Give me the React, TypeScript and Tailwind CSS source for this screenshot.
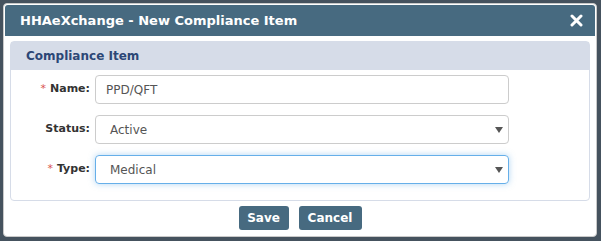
import type React from "react";

const font = { fontFamily: '"DejaVu Sans", Verdana, sans-serif' };

export default function App() {
    return (
        <div
            className="h-[241px] w-[601px] bg-[#45525e] p-[3px] pr-[4px]"
            style={font}
        >
            <div className="flex h-[234px] flex-col rounded-[4px] border border-[#c9c9c9] bg-white p-[1px]">
                {/* Title bar */}
                <div className="flex h-[31px] items-center justify-between rounded-t-[3px] bg-[#476a80] pl-[15px] pr-[12px]">
                    <span className="text-[13px] font-bold text-white">
                        HHAeXchange - New Compliance Item
                    </span>
                    <svg width="13" height="13" viewBox="0 0 13 13">
                        <path
                            d="M2 2 L11 11 M11 2 L2 11"
                            stroke="white"
                            strokeWidth="3"
                            strokeLinecap="round"
                        />
                    </svg>
                </div>

                <div className="flex flex-1 flex-col px-[5px] pt-[5px]">
                    {/* Panel */}
                    <div className="rounded-[4px] border border-[#d6dce8]">
                        <div className="flex h-[28px] items-center bg-[#d6dce8] pl-[15px]">
                            <span className="text-[12px] font-bold text-[#2c4776]">
                                Compliance Item
                            </span>
                        </div>
                        <div className="flex flex-col gap-[11px] pb-[16px] pt-[5px]">
                            <FormRow label="Name" required>
                                <div className="flex h-[29px] w-[414px] items-center rounded-[4px] border border-[#cccccc] pl-[10px] text-[12px] text-[#555]">
                                    PPD/QFT
                                </div>
                            </FormRow>
                            <FormRow label="Status">
                                <SelectBox value="Active" />
                            </FormRow>
                            <FormRow label="Type" required>
                                <SelectBox value="Medical" focused />
                            </FormRow>
                        </div>
                    </div>

                    {/* Buttons */}
                    <div className="flex justify-center gap-[10px] pt-[5px]">
                        <button
                            type="button"
                            className="h-[24px] w-[50px] rounded-[3px] bg-[#476a80] text-[12px] font-bold text-white"
                        >
                            Save
                        </button>
                        <button
                            type="button"
                            className="h-[24px] w-[63px] rounded-[3px] bg-[#476a80] text-[12px] font-bold text-white"
                        >
                            Cancel
                        </button>
                    </div>
                </div>
            </div>
        </div>
    );
}

function FormRow({
    label,
    required,
    children,
}: {
    label: string;
    required?: boolean;
    children: React.ReactNode;
}) {
    return (
        <div className="flex items-center gap-[5px]">
            <div className="w-[79px] text-right text-[11px] font-bold text-[#333]">
                {required && <span className="mr-[4px] font-normal text-[#d9534f]">*</span>}
                {label}:
            </div>
            {children}
        </div>
    );
}

function SelectBox({ value, focused }: { value: string; focused?: boolean }) {
    return (
        <div
            className={
                focused
                    ? "flex h-[29px] w-[414px] items-center justify-between rounded-[4px] border border-[#66afe9] pl-[14px] pr-[5px] text-[12px] text-[#555] shadow-[0_0_6px_rgba(102,175,233,0.5)]"
                    : "flex h-[29px] w-[414px] items-center justify-between rounded-[4px] border border-[#cccccc] pl-[14px] pr-[5px] text-[12px] text-[#555]"
            }
        >
            <span>{value}</span>
            <svg width="8" height="6" viewBox="0 0 8 6">
                <path d="M0 0 L8 0 L4 6 Z" fill="#555" />
            </svg>
        </div>
    );
}
